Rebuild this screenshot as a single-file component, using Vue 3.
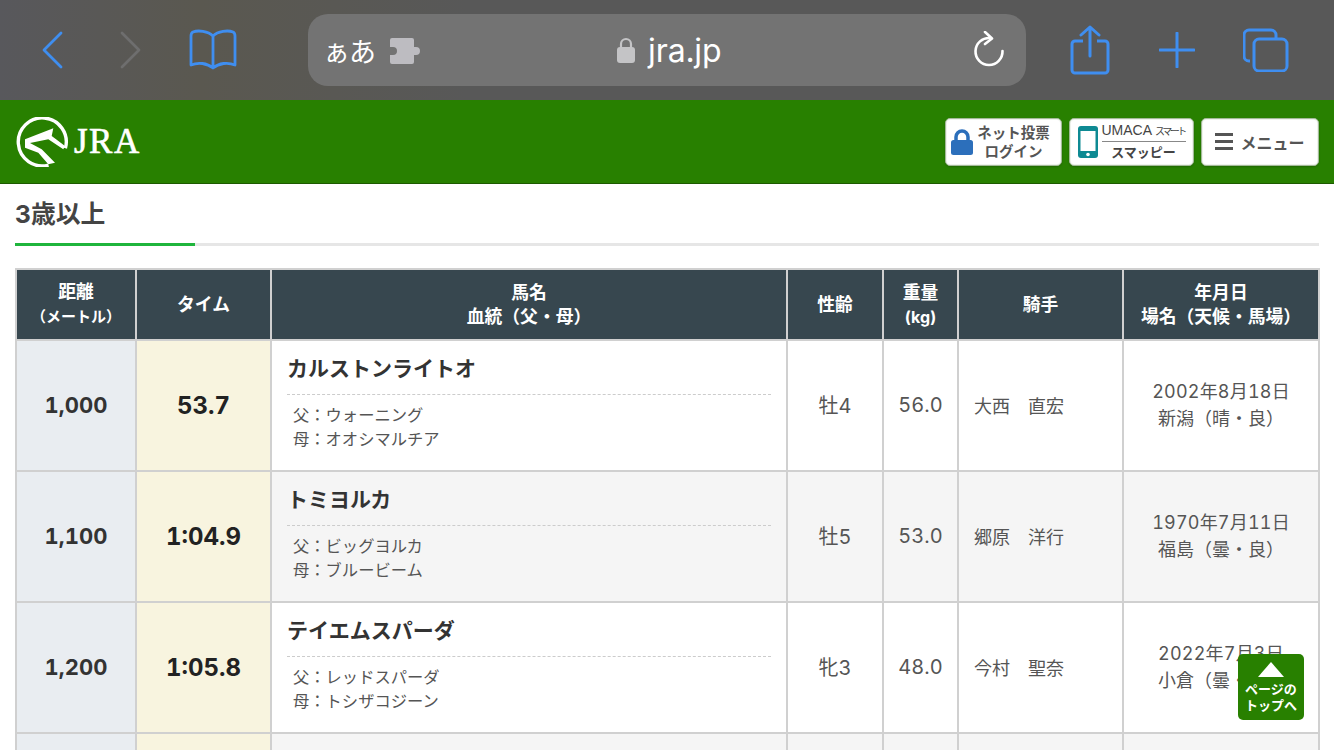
<template>
  <div class="page">
    <div class="safari">
      <div class="nav-left">
        <svg class="ic" width="28" height="40" viewBox="0 0 28 40"><path d="M21 3 L4 20 L21 37" fill="none" stroke="#3f8ef0" stroke-width="2.800" stroke-linecap="round" stroke-linejoin="round"/></svg>
        <svg class="ic fwd" width="28" height="40" viewBox="0 0 28 40"><path d="M7 3 L24 20 L7 37" fill="none" stroke="#6e6e6e" stroke-width="2.800" stroke-linecap="round" stroke-linejoin="round"/></svg>
        <svg class="ic book" width="50" height="42" viewBox="0 0 50 42"><path d="M25 7 C20 2 10 1 5 3 C3 4 3 5 3 7 V36 C10 33 19 34 25 39 C31 34 40 33 47 36 V7 C47 5 47 4 45 3 C40 1 30 2 25 7 Z M25 7 V39" fill="none" stroke="#3f8ef0" stroke-width="2.800" stroke-linejoin="round"/></svg>
      </div>
      <div class="urlbar">
        <div class="url-left">
          <span class="aa">ぁあ</span>
          <svg width="32" height="26" viewBox="0 0 32 26"><path d="M2 0 H22 a2 2 0 0 1 2 2 V9 H26 a4 4 0 1 1 0 8 H24 V24 a2 2 0 0 1 -2 2 H2 a2 2 0 0 1 -2 -2 V17 H3 a4 4 0 1 0 0 -8 H0 V2 a2 2 0 0 1 2 -2 Z" fill="#bdbcc1"/></svg>
        </div>
        <div class="url-mid">
          <svg width="18" height="26" viewBox="0 0 18 26"><rect x="0" y="10" width="18" height="16" rx="3" fill="#c4c4c6"/><path d="M4 11 V7 a5 5 0 0 1 10 0 V11" fill="none" stroke="#c4c4c6" stroke-width="2.200"/></svg>
          <span>jra.jp</span>
        </div>
        <svg class="reload" width="32" height="38" viewBox="0 0 32 38"><path d="M17 7 A13.500 13.500 0 1 0 29.500 20" fill="none" stroke="#fff" stroke-width="2.600" stroke-linecap="round"/><path d="M12 1 L19 7.500 L12 13" fill="none" stroke="#fff" stroke-width="2.600" stroke-linecap="round" stroke-linejoin="round"/></svg>
      </div>
      <div class="nav-right">
        <svg width="40" height="50" viewBox="0 0 40 50"><path d="M13 16 H5 a3 3 0 0 0 -3 3 V45 a3 3 0 0 0 3 3 H35 a3 3 0 0 0 3 -3 V19 a3 3 0 0 0 -3 -3 H27" fill="none" stroke="#3f8ef0" stroke-width="3"/><path d="M20 2 V31 M11 10 L20 2 L29 10" fill="none" stroke="#3f8ef0" stroke-width="3" stroke-linecap="round" stroke-linejoin="round"/></svg>
        <svg class="plus" width="36" height="36" viewBox="0 0 36 36"><path d="M18 1 V35 M1 18 H35" stroke="#3f8ef0" stroke-width="3" stroke-linecap="round"/></svg>
        <svg class="tabs" width="46" height="44" viewBox="0 0 46 44"><path d="M7 33 H6 a5 5 0 0 1 -5 -5 V7 a5 5 0 0 1 5 -5 H28 a5 5 0 0 1 5 5 V10" fill="none" stroke="#3f8ef0" stroke-width="3"/><rect x="11" y="11" width="33" height="32" rx="5" fill="none" stroke="#3f8ef0" stroke-width="3"/></svg>
      </div>
    </div>

    <header class="header">
      <div class="logo">
        <svg width="54" height="50" viewBox="0 0 54 50">
          <path d="M50.400 31.300 A24 24 0 1 0 33.500 48.100" fill="none" stroke="#fff" stroke-width="3.400"/>
          <path d="M10 22.300 L38.300 11.300 L36.700 19 L50 29 L48.300 32.300 L33.300 22.300 L15 26 L26.700 32.300 L40 45.700 L33.300 47.300 L23.300 35.700 L10 30.700 Z" fill="#fff"/>
        </svg>
        <span class="logo-text">JRA</span>
      </div>
      <div class="head-btns">
        <a class="hbtn login">
          <svg width="22" height="28" viewBox="0 0 22 28"><path d="M5 13 V9 a6 6 0 0 1 12 0 V13" fill="none" stroke="#2c6fbb" stroke-width="3.500"/><rect y="12" width="22" height="15" rx="2.500" fill="#2c6fbb"/></svg>
          <span class="two">ネット投票<br>ログイン</span>
        </a>
        <a class="hbtn umaca">
          <svg width="20" height="32" viewBox="0 0 20 32"><rect width="20" height="32" rx="3" fill="#0e8a93"/><rect x="2.500" y="5" width="15" height="20" fill="#fff"/><circle cx="10" cy="28.500" r="1.800" fill="#fff"/></svg>
          <span class="stack"><span class="um">UMACA<em>スマート</em></span><span class="sm">スマッピー</span></span>
        </a>
        <a class="hbtn menu">
          <span class="burger"><i></i><i></i><i></i></span>
          <span>メニュー</span>
        </a>
      </div>
    </header>

    <main class="content">
      <h2 class="title">3歳以上</h2>
      <table class="records">
        <colgroup>
          <col v-for="w in widths" :key="w.id" :style="{ width: w.px + 'px' }">
        </colgroup>
        <thead>
          <tr>
            <th>距離<br><small>（メートル）</small></th>
            <th>タイム</th>
            <th>馬名<br>血統（父・母）</th>
            <th>性齢</th>
            <th>重量<br><small class="kg">(kg)</small></th>
            <th>騎手</th>
            <th>年月日<br>場名（天候・馬場）</th>
          </tr>
        </thead>
        <tbody>
          <tr v-for="r in rows" :key="r.dist">
            <td class="dist">{{ r.dist }}</td>
            <td class="time">{{ r.time }}</td>
            <td class="horse">
              <div class="hname">{{ r.name }}</div>
              <div class="blood">父：{{ r.sire }}<br>母：{{ r.dam }}</div>
            </td>
            <td class="mid">{{ r.age }}</td>
            <td class="mid">{{ r.weight }}</td>
            <td class="jockey">{{ r.jockey }}</td>
            <td class="date"><span class="ymd">{{ r.date }}</span><br>{{ r.place }}</td>
          </tr>
        </tbody>
      </table>
    </main>

    <a class="pagetop">
      <span class="tri"></span>
      <span>ページの<br>トップへ</span>
    </a>
  </div>
</template>

<script setup>
const widths = [
  { id: 1, px: 120 },
  { id: 2, px: 135 },
  { id: 3, px: 516 },
  { id: 4, px: 96 },
  { id: 5, px: 75 },
  { id: 6, px: 165 },
  { id: 7, px: 196 },
]

const rows = [
  { dist: '1,000', time: '53.7', name: 'カルストンライトオ', sire: 'ウォーニング', dam: 'オオシマルチア', age: '牡4', weight: '56.0', jockey: '大西　直宏', date: '2002年8月18日', place: '新潟（晴・良）' },
  { dist: '1,100', time: '1:04.9', name: 'トミヨルカ', sire: 'ビッグヨルカ', dam: 'ブルービーム', age: '牡5', weight: '53.0', jockey: '郷原　洋行', date: '1970年7月11日', place: '福島（曇・良）' },
  { dist: '1,200', time: '1:05.8', name: 'テイエムスパーダ', sire: 'レッドスパーダ', dam: 'トシザコジーン', age: '牝3', weight: '48.0', jockey: '今村　聖奈', date: '2022年7月3日', place: '小倉（曇・良）' },
  { dist: '1,300', time: '1:17.1', name: 'メイケイエール', sire: 'ミッキーアイル', dam: 'シロインジャー', age: '牝4', weight: '51.0', jockey: '池添　謙一', date: '2022年6月5日', place: '中京（晴・良）' },
]
</script>

<style>
html, body {
  margin: 0;
  background: #fff;
  overflow: hidden;
}
</style>

<style scoped>
.page {
  width: 1334px;
  height: 750px;
  overflow: hidden;
  font-family: Inter, "Noto Sans CJK JP", sans-serif;
  font-variant-numeric: tabular-nums;
  color: #333;
}
.safari {
  height: 100px;
  background: linear-gradient(90deg, #58585c 0%, #5a5850 15%, #585858 35%, #585858 100%);
  display: flex;
  align-items: center;
  box-sizing: border-box;
  padding-left: 40px;
}
.nav-left {
  display: flex;
  align-items: center;
  width: 268px;
  flex: none;
}
.ic.fwd { margin-left: 47px; }
.ic.book { margin-left: 45px; }
.urlbar {
  width: 718px;
  height: 72px;
  background: #737373;
  border-radius: 20px;
  display: flex;
  align-items: center;
  flex: none;
}
.url-left {
  display: flex;
  align-items: center;
  gap: 15px;
  padding-left: 15px;
  width: 285px;
  color: #fff;
  font-size: 27px;
}
.url-left svg { margin-top: 1px; }
.aa { letter-spacing: -1px; }
.url-mid {
  display: flex;
  align-items: center;
  gap: 13px;
  color: #fff;
  font-size: 32px;
  margin-left: 9px;
}
.reload { margin-left: auto; margin-right: 21px; }
.nav-right {
  display: flex;
  align-items: center;
  margin-left: 44px;
}
.nav-right .plus { margin-left: 49px; }
.nav-right .tabs { margin-left: 48px; }
.header {
  height: 83px;
  background: #288000;
  border-bottom: 1px solid #1c5a00;
  display: flex;
  align-items: center;
  justify-content: space-between;
  padding: 0 15px 0 15px;
}
.logo {
  display: flex;
  align-items: center;
  gap: 5px;
}
.logo-text {
  color: #fff;
  font-family: "Liberation Serif", serif;
  font-size: 35px;
  letter-spacing: 1.500px;
  -webkit-text-stroke: 0.6px #fff;
}
.head-btns {
  display: flex;
  gap: 7px;
}
.hbtn {
  height: 48px;
  box-sizing: border-box;
  background: #fff;
  border: 1px solid #a3ba98;
  border-radius: 5px;
  box-shadow: 0 1px 2px #0003, inset 0 0 0 1px #eef2ec;
  display: flex;
  align-items: center;
  justify-content: center;
  color: #555;
  font-weight: 700;
  font-size: 14.500px;
}
.login { width: 117px; gap: 4px; padding-right: 6px; }
.two { text-align: center; line-height: 19px; }
.umaca { width: 125px; gap: 4px; }
.stack { display: flex; flex-direction: column; align-items: center; width: 84px; }
.um {
  font-family: "Liberation Sans", "Noto Sans CJK JP", sans-serif;
  font-size: 14px;
  font-weight: 400;
  line-height: 18px;
  white-space: nowrap;
  border-bottom: 1px solid #888;
  color: #444;
  width: 84px;
}
.um em {
  font-style: normal;
  font-size: 10px;
  letter-spacing: -2.500px;
  margin-left: 3px;
}
.sm { font-size: 13px; line-height: 20px; color: #444; }
.menu { width: 118px; gap: 7px; font-size: 16px; }
.burger { display: flex; flex-direction: column; gap: 4px; }
.burger i { display: block; width: 18px; height: 3px; background: #555; }
.content {
  padding: 0 15px;
}
.title {
  margin: 0;
  height: 62px;
  box-sizing: border-box;
  padding-top: 14px;
  font-size: 24.800px;
  line-height: 32px;
  font-weight: 700;
  color: #444;
  position: relative;
  border-bottom: 3px solid #e6e6e6;
}
.title::after {
  content: "";
  position: absolute;
  left: 0;
  bottom: -3px;
  width: 180px;
  height: 3px;
  background: #1fb53c;
}
.records {
  margin-top: 22px;
  width: 1303px;
  table-layout: fixed;
  border-collapse: collapse;
  border: 2px solid #d0d0d0;
}
th, td {
  border: 2px solid #d0d0d0;
  padding: 0;
}
th {
  height: 69px;
  background: #37474f;
  color: #fff;
  font-size: 17.800px;
  line-height: 24px;
  font-weight: 700;
}
th small { font-size: 15px; }
th small.kg { font-size: 16px; }
td {
  height: 127px;
  padding-bottom: 2px;
  text-align: center;
  font-size: 20px;
  color: #555;
}
tbody tr:nth-child(even) td { background: #f5f5f5; }
tbody tr td.dist {
  background: #e9edf1;
  font-size: 22px;
  font-weight: 700;
  color: #333;
}
tbody tr td.time {
  background: #f8f4df;
  font-size: 24px;
  font-weight: 700;
  color: #222;
  padding-bottom: 0;
  height: 129px;
}
.horse {
  text-align: left;
  padding: 0 15px 6px;
  height: 123px;
}
.hname {
  font-size: 21px;
  font-weight: 700;
  color: #333;
  line-height: 28px;
  padding-bottom: 11px;
  border-bottom: 1px dashed #ccc;
  margin-bottom: 8px;
}
.blood {
  font-size: 16.300px;
  line-height: 24px;
  padding-left: 6px;
  color: #555;
}
.jockey {
  text-align: left;
  padding-left: 15px;
  font-size: 18px;
}
.date {
  font-size: 18px;
  line-height: 27px;
}
.ymd { letter-spacing: 0.2px; }
.pagetop {
  position: fixed;
  left: 1238px;
  top: 654px;
  width: 66px;
  height: 66px;
  background: #288000;
  border-radius: 5px;
  color: #fff;
  font-size: 13px;
  font-weight: 700;
  line-height: 16px;
  text-align: center;
  display: flex;
  flex-direction: column;
  align-items: center;
  padding-top: 8px;
  box-sizing: border-box;
  gap: 4px;
}
.tri {
  width: 0;
  height: 0;
  border-left: 13px solid transparent;
  border-right: 13px solid transparent;
  border-bottom: 15px solid #fff;
}
</style>
